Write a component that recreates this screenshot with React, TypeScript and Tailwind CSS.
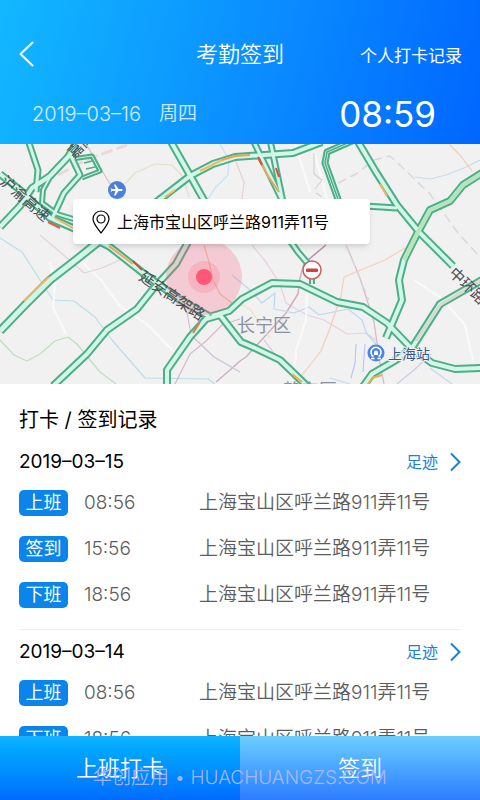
interface Road {
  d: string;
  w?: number;
}

interface RecordItem {
  type: string;
  time: string;
}

interface RecordDay {
  date: string;
  items: RecordItem[];
}

const ADDRESS = "上海宝山区呼兰路911弄11号";

const days: RecordDay[] = [
  {
    date: "2019–03–15",
    items: [
      { type: "上班", time: "08:56" },
      { type: "签到", time: "15:56" },
      { type: "下班", time: "18:56" },
    ],
  },
  {
    date: "2019–03–14",
    items: [
      { type: "上班", time: "08:56" },
      { type: "下班", time: "18:56" },
    ],
  },
];

const roads: Road[] = [
  { d: "M28 140 L38 170 L36 192", w: 7 },
  { d: "M0 227 L20 206 L32 188 L50 176 L68 157 L76 144", w: 8 },
  { d: "M50 177 L43 190 L42 203 L57 214 L80 221", w: 6 },
  { d: "M70 154 L80 175 L64 193 L52 219", w: 7 },
  { d: "M72 159 L92 156 L100 171 L82 178", w: 5 },
  { d: "M0 174 L20 190 L50 218 L73 228 L110 247 L143 273 L180 300 L209 316", w: 8 },
  { d: "M0 331 L25 305 L50 280 L77 259 L97 243 L112 232" },
  { d: "M53 386 L87 354 L107 330 L137 309 L153 289 L176 264 L188 242", w: 8 },
  { d: "M167 386 L167 370 L190 337 L206 319 L220 315 L241 342 L255 348 L280 360 L307 386", w: 8 },
  { d: "M212 316 L229 311 L242 299 L272 283 L300 284 L337 302 L363 307 L387 323 L411 348 L432 363 L455 369 L482 368", w: 8 },
  { d: "M155 203 L190 176 L213 164 L235 157 L293 153 L322 142", w: 8 },
  { d: "M170 140 L187 170 L205 202", w: 8 },
  { d: "M253 140 L283 202", w: 7 },
  { d: "M270 140 L283 202", w: 7 },
  { d: "M291 242 L298 252 L310 266", w: 7 },
  { d: "M352 141 L327 152 L325 163 L339 202", w: 7 },
  { d: "M357 140 L376 172 L397 205 L420 233 L453 266", w: 8 },
  { d: "M365 206 L397 208", w: 7 },
  { d: "M482 173 L463 185 L450 201 L430 210 L418 232 L404 260 L399 280 L402 300 L386 338", w: 8 },
  { d: "M482 280 L440 304 L412 348 L396 360 L372 374 L362 388", w: 8 },
  { d: "M312 276 L312 284", w: 6 },
];

const traffic = [
  { d: "M24 301 L37 288 L49 277", c: "#f4b65c" },
  { d: "M48 222 L60 228", c: "#e45a43" },
  { d: "M55 218 L73 228", c: "#f2b063" },
  { d: "M109 246 L133 264", c: "#f0a95a" },
  { d: "M133 261 L142 270", c: "#e4433b" },
  { d: "M165 197 L175 190 M200 171 L222 160", c: "#f5b75d" },
  { d: "M222 160 L235 156 L250 155", c: "#f0a049" },
  { d: "M258 158 L268 176 L279 192", c: "#efa555" },
  { d: "M258 157 L262 165 M276 168 L279 177", c: "#df4c42" },
  { d: "M380 184 L387 196", c: "#f2b35c" },
  { d: "M193 333 L200 322", c: "#e8774c" },
  { d: "M292 374 L302 382 M368 384 L372 378 L382 375", c: "#f0ad4e" },
];

const MapView = () => {
  return (
    <svg
      viewBox="0 144 480 240"
      preserveAspectRatio="xMidYMid slice"
      className="block h-full w-full bg-[#f1f1f2] font-['Inter','Noto_Sans_CJK_SC',sans-serif]"
      fill="none"
      aria-label="地图"
    >
      {/* minor streets and district borders */}
      <g strokeWidth="1.2" strokeLinejoin="round">
        <path d="M0 340 L14 355 L27 361 L40 354 L55 341 L68 337 L77 344 L100 372 L116 384" stroke="#bde0bb" />
        <path d="M0 238 L22 252 L40 280 L53 300 L74 301 L95 317 L112 340 L145 378 L208 379 L215 384" stroke="#b7dfe8" />
        <path d="M220 144 L229 160 L228 175 L215 188 L208 199" stroke="#c4e2f0" />
        <path d="M50 262 L55 284 L53 307 L66 334 M80 260 L101 280 L120 306 L148 325 L175 353" stroke="#fafafa" strokeWidth="2" />
        <path d="M40 235 L73 263 L84 273 L102 268 L122 259" stroke="#e7d0da" />
        <path d="M86 144 L110 184" stroke="#cfc9be" />
        <path d="M125 184 L135 173 L155 164 L172 165 L183 177 L189 197" stroke="#e6dec8" />
        <path d="M448 143 L460 155 L472 171" stroke="#f0cdb6" />
        <path d="M415 177 L430 179 L446 175 L464 168 L480 160" stroke="#c9dcec" />
        <path d="M234 157 L244 182 L242 199" stroke="#edccd2" />
        <path d="M295 144 L310 192 M312 144 L327 199" stroke="#fafafa" strokeWidth="2" />
        <path d="M314 153 L314 174 L322 180 L315 189 M316 193 L322 197" stroke="#d9cdd7" />
        <path d="M252 245 L266 262 L280 284 L286 303 L307 315 L324 320 L347 334 L366 333 L377 341" stroke="#e7cfe1" />
        <path d="M405 248 L385 260 L344 277 L341 296 L330 328 L321 351 L303 374 L294 384" stroke="#f2cfb9" />
        <path d="M305 260 L300 278 L298 294 L286 313 L268 333 L255 347 L246 357 L240 361 L230 370 L216 382" stroke="#cdb0be" strokeWidth="1.5" />
        <path d="M175 384 L190 354 L205 342 L222 325 L240 319" stroke="#dab8ca" />
        <path d="M187 312 L191 335 L214 357 L240 372" stroke="#cfc1d5" />
        <path d="M204 245 L209 262 L213 280 L220 294 L232 303" stroke="#e6c6a0" />
        <path d="M232 275 L250 290 L262 303 L275 293 L274 309 L294 313 L309 307 L319 315 L348 309 L362 320 L367 334 L376 344" stroke="#bed7ef" />
        <path d="M356 344 L355 363 L351 378 M365 344 L363 372" stroke="#bcc8ee" />
        <path d="M307 293 L306 320 L296 350 L295 365 M414 280 L441 298 L465 325 L473 361" stroke="#fafafa" strokeWidth="2" />
        <path d="M347 247 L360 278 L374 322 L380 363 L384 384" stroke="#d6b7c8" />
        <path d="M397 384 L414 370 L431 354 M264 340 L280 361 L301 380" stroke="#d4c7e6" />
        <path d="M240 304 L250 309 L270 338" stroke="#eee0c5" />
        <path d="M430 368 L452 384 M330 378 L350 384" stroke="#c8d8ed" />
        <path d="M326 245 L308 260" stroke="#b491ad" strokeWidth="1.5" />
      </g>
      <g stroke="#dcd6da" strokeWidth="1.5" strokeDasharray="9 5">
        <path d="M338 183 L356 174 L374 160 L390 156 L403 168 L430 194 L458 233 L480 257" />
        <path d="M346 245 L360 279 L369 300" />
      </g>
      <g stroke="#ecd8dc" strokeWidth="3" strokeDasharray="12 4">
        <path d="M58 175 L88 159 L127 145" />
      </g>

      {/* highways: dark edge first, pale lane over it */}
      <g strokeLinejoin="round">
        {roads.map((road) => (
          <path key={road.d} d={road.d} stroke="#4fad88" strokeWidth={road.w ?? 9} />
        ))}
        {roads.map((road) => (
          <path key={road.d} d={road.d} stroke="#d0f7e8" strokeWidth={(road.w ?? 9) - 4} />
        ))}
        <path d="M482 173 L463 185 L450 201 L430 210 L418 232 L404 260" stroke="#b4e6ba" strokeWidth="4" />
        <path d="M480 281 L440 305 L416 341" stroke="#d9d9cd" strokeWidth="3" />
        <path d="M352 141 L327 152 L325 163 L339 202 M84 163 L92 161 M86 169 L95 167" stroke="#4fad88" strokeWidth="1.5" />
        {traffic.map((seg) => (
          <path key={seg.d} d={seg.d} stroke={seg.c} strokeWidth="2" />
        ))}
      </g>

      {/* current position */}
      <circle cx="204" cy="277" r="38" fill="#ff5c7c" fillOpacity="0.25" />
      <circle cx="204" cy="277" r="16" fill="#ff5c7c" fillOpacity="0.2" />
      <circle cx="204" cy="277" r="8" fill="#ff5777" />

      {/* airport */}
      <circle cx="117" cy="190" r="9" fill="#4c7fdc" />
      <path
        d="M110.500 187.500 L112 188.900 L115.500 188.900 L114 184.500 L115.500 184.500 L118.500 188.900 L122 189 Q123.500 190 122 191 L118.500 191.100 L115.500 195.500 L114 195.500 L115.500 191.100 L112 191.100 L110.500 192.500 L111.200 190 Z"
        fill="#fff"
      />

      {/* no entry */}
      <circle cx="312" cy="270" r="9" fill="#fff" stroke="#c8625f" strokeWidth="1.5" />
      <rect x="306" y="268.500" width="12" height="3.500" rx="1" fill="#cf4440" />

      {/* railway station */}
      <circle cx="376" cy="353" r="8.500" fill="#4b83dd" />
      <path
        d="M373.500 356.500 A5 5 0 1 1 378.500 356.500 M371 358.500 H374.500 M377.500 358.500 H381"
        stroke="#fff"
        strokeWidth="1.5"
      />
      <path d="M374 355 V352.500 A2 2 0 0 1 378 352.500 V355 Z" fill="#fff" />

      <g fill="#4b4b50">
        <text fontSize="15" transform="translate(-1 183) rotate(41)">沪渝高速</text>
        <text fontSize="15" transform="translate(138 279) rotate(34)">延安高架路</text>
        <text fontSize="15" transform="translate(448 274) rotate(44)">中环路</text>
        <text fontSize="15" transform="translate(74 159) rotate(-44)">嘉闵</text>
        <text fontSize="18" x="237" y="332" fill="#8b92a3">长宁区</text>
        <text fontSize="18" x="283" y="397" fill="#8b92a3">静安区</text>
        <text fontSize="14" x="388" y="359" fill="#36598c" stroke="#f3f3f3" strokeWidth="2" paintOrder="stroke">上海站</text>
      </g>
    </svg>
  );
};

const RecordRow = ({ item }: { item: RecordItem }) => {
  return (
    <li className="flex h-[46px] items-center">
      <span className="flex h-[26px] w-[49px] shrink-0 items-center justify-center rounded-[5px] bg-[#0b84ec] text-lg text-white">
        {item.type}
      </span>
      <time className="ml-4 w-[115px] shrink-0 text-[19px] font-[350]">{item.time}</time>
      <span className="text-[19px] font-[350] whitespace-nowrap">{ADDRESS}</span>
    </li>
  );
};

const App = () => {
  return (
    <div className="relative flex h-screen flex-col overflow-hidden bg-white font-['Inter','Noto_Sans_CJK_SC',sans-serif]">
      <header className="h-36 shrink-0 bg-linear-[105deg,#12b8ff,#0a8cff_55%,#0066ff] pt-8 text-white">
        <div className="grid h-11 grid-cols-[1fr_auto_1fr] items-center px-[18px]">
          <button type="button" aria-label="返回" className="justify-self-start">
            <svg width="18" height="26" viewBox="0 0 18 26" fill="none" stroke="currentColor" strokeWidth="2" strokeLinecap="round" strokeLinejoin="round">
              <path d="M14.500 1.500 L2.500 13 L14.500 24.500" />
            </svg>
          </button>
          <h1 className="text-[22px] font-[350]">考勤签到</h1>
          <a href="#records" className="justify-self-end pt-1 text-[17px] leading-6">个人打卡记录</a>
        </div>
        <div className="flex h-[72px] items-center justify-between pt-1 pr-11 pl-8">
          <p className="flex items-center gap-[18px] text-[19px] font-[350] text-white/80">
            <span className="text-xl">2019–03–16</span>
            <span>周四</span>
          </p>
          <time className="text-[35px]">08:59</time>
        </div>
      </header>

      <section className="relative h-60 shrink-0 overflow-hidden">
        <MapView />
        <div className="absolute top-[55px] left-[73px] flex h-[45px] w-[297px] items-center gap-[7px] rounded-sm bg-white pl-[19px] text-base text-black shadow-md">
          <svg width="18" height="24" viewBox="0 0 18 24" fill="none" stroke="currentColor" strokeWidth="1.2">
            <path d="M9 23 C5.500 18 1 13.500 1 9 A8 8 0 0 1 17 9 C17 13.500 12.500 18 9 23 Z" />
            <circle cx="9" cy="9" r="4" />
          </svg>
          <span className="whitespace-nowrap">上海市宝山区呼兰路911弄11号</span>
        </div>
      </section>

      <main id="records" className="min-h-0 flex-1 overflow-hidden px-[19px] pt-4">
        <h2 className="text-xl leading-10 text-black">打卡 / 签到记录</h2>
        {days.map((day) => (
          <section key={day.date} className="border-b border-[#eeeeee] pb-3">
            <div className="flex h-11 items-center justify-between text-black">
              <h3 className="text-[19px]">{day.date}</h3>
              <a href="#records" className="flex items-center gap-3 text-base text-[#1a80dd]">
                足迹
                <svg width="11" height="20" viewBox="0 0 11 20" fill="none" stroke="currentColor" strokeWidth="2">
                  <path d="M1 1.500 L9.500 10 L1 18.500" />
                </svg>
              </a>
            </div>
            <ul className="-mt-1 -mb-px text-[#5c5c5c]">
              {day.items.map((item) => (
                <RecordRow key={item.time} item={item} />
              ))}
            </ul>
          </section>
        ))}
      </main>

      <footer className="grid h-16 shrink-0 grid-cols-2 text-[22px] font-[350] text-white">
        <button type="button" className="bg-linear-to-b from-[#12b4ff] to-[#006cff]">上班打卡</button>
        <button type="button" className="bg-linear-to-b from-[#6cceff] to-[#2f7bff]">签到</button>
      </footer>
      <p className="pointer-events-none absolute inset-x-0 bottom-2 text-center text-[19px] leading-7 font-[350] text-[#b9baf8]/90">
        华创应用 • HUACHUANGZS.COM
      </p>
    </div>
  );
};

export default App;
